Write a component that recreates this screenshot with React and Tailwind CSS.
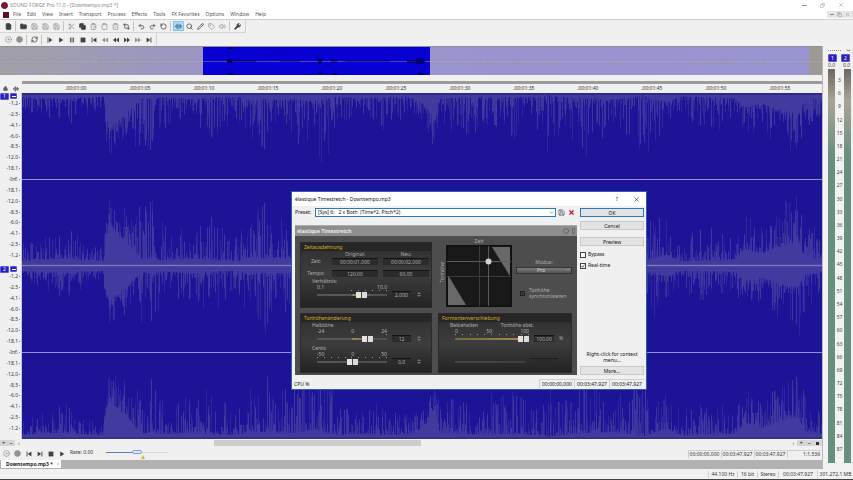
import {
  AudioLines, ChevronDown, ClipboardPaste, Clipboard, ClipboardCheck, Copy, Crop, File, Folder, Lock,
  Disc, Pencil, Redo2, RotateCcw, RefreshCw, Save, Scissors, Search, Tag, Undo2, Volume2, X, Circle, Wrench,
} from "lucide-react";
import clsx from "clsx";

const MENU = ["File", "Edit", "View", "Insert", "Transport", "Process", "Effects", "Tools", "FX Favorites", "Options", "Window", "Help"];
const TIMES = ["00:01:00", "00:01:05", "00:01:10", "00:01:15", "00:01:20", "00:01:25", "00:01:30", "00:01:35", "00:01:40", "00:01:45", "00:01:50", "00:01:55"];
const DB_HALF = ["-1.2", "-2.5", "-4.1", "-6.0", "-8.5", "-12.0", "-18.1"];
const DB = [...DB_HALF, "-Inf.", ...[...DB_HALF].reverse()];
const METER = Array.from({ length: 29 }, (_, i) => (i + 1) * 3);

// x, peak depth, density (1 = solid block of peaks)
const ENVELOPE = [
  [0, 18, 0.2], [20, 24, 0.2], [45, 36, 0.2], [60, 22, 0.2], [81, 16, 0.2], [84, 54, 0.8], [88, 66, 0.9], [98, 52, 0.8],
  [112, 60, 0.3], [120, 56, 0.1], [132, 70, 0.1], [140, 38, 0.1], [170, 36, 0.2], [186, 50, 0.1], [215, 28, 0.1],
  [225, 44, 0.2], [243, 66, 0.1], [255, 36, 0.2], [272, 62, 0.1], [290, 54, 0.2], [302, 72, 0.1], [315, 32, 0.1],
  [340, 26, 0.2], [360, 38, 0.1], [385, 24, 0.1], [402, 28, 0.6], [412, 66, 0.7], [418, 30, 0.2], [440, 46, 0.1],
  [462, 38, 0.1], [490, 46, 0.1], [510, 30, 0.1], [527, 70, 0], [540, 32, 0.1], [562, 66, 0.1], [572, 60, 0.1],
  [590, 38, 0.2], [620, 62, 0], [645, 44, 0.3], [660, 26, 0.1], [690, 40, 0.1], [712, 24, 0.2], [722, 46, 0.5],
  [740, 36, 0.4], [754, 50, 0.5], [768, 62, 0.5], [776, 78, 0.4], [784, 42, 0.2], [800, 26, 0.2],
];

function random(seed) {
  let s = seed;
  return () => {
    s = (s * 1664525 + 1013904223) % 4294967296;
    return s / 4294967296;
  };
}

function envelopeAt(x) {
  const i = ENVELOPE.findIndex((p) => p[0] > x);
  const a = ENVELOPE[i - 1];
  const b = ENVELOPE[i];
  const t = (x - a[0]) / (b[0] - a[0]);
  return [a[1] + (b[1] - a[1]) * t, a[2] + (b[2] - a[2]) * t];
}

function peaks(seed, edge, dir, scale) {
  const rnd = random(seed);
  let d = "";
  for (let x = 0; x < 800; x++) {
    const [depth, dense] = envelopeAt(x);
    const r = rnd();
    const len = 2 + depth * scale * (dense * 0.6 + (1 - dense * 0.6) * Math.pow(r, 4 - dense * 2));
    d += `M${x + 0.5} ${edge}v${(dir * len).toFixed(1)}`;
  }
  return d;
}

const PEAKS = [peaks(7, 0, 1, 0.9), peaks(7, 172, -1, 1), peaks(91, 174, 1, 0.9), peaks(91, 346, -1, 1)];
const PEAKS_SOFT = [peaks(33, 0, 1, 1), peaks(52, 172, -1, 1.1), peaks(75, 174, 1, 1), peaks(18, 346, -1, 1.1)];

const rndOverview = random(5);
const OVERVIEW = Array.from({ length: 270 }, (_, i) => [i * 3, rndOverview() * 4, rndOverview()]);

function Waveform() {
  return (
    <svg className="block h-full w-full" viewBox="0 0 800 346" preserveAspectRatio="none">
      <rect width="800" height="346" fill="#1c1396" />
      <g stroke="#4a44a2" strokeWidth="1">
        {PEAKS_SOFT.map((d, i) => <path key={i} d={d} opacity="0.4" />)}
        {PEAKS.map((d, i) => <path key={i} d={d} opacity="0.7" />)}
      </g>
      <rect width="800" height="2" fill="#312a84" />
      <rect y="344" width="800" height="2" fill="#353080" />
      <rect y="86" width="800" height="1" fill="#9490d4" />
      <rect y="259" width="800" height="1" fill="#9490d4" />
      <rect y="171" width="800" height="3" fill="#4c46a0" />
      <rect y="172" width="800" height="1" fill="#7f7ab8" />
    </svg>
  );
}

function Overview() {
  return (
    <svg className="block h-[29px] w-full" viewBox="0 0 822 29" preserveAspectRatio="none">
      <defs>
        <linearGradient id="ov">
          <stop offset="0" stopColor="#a09fa6" />
          <stop offset="0.07" stopColor="#9f9daf" />
          <stop offset="0.2" stopColor="#9a97c2" />
          <stop offset="0.6" stopColor="#9994d0" />
          <stop offset="1" stopColor="#9994d2" />
        </linearGradient>
      </defs>
      <rect width="822" height="29" fill="url(#ov)" />
      {OVERVIEW.map(([x, h, o]) => (
        <rect key={x} x={x} y={15 - h / 2} width="3" height={h} fill="#96948e" opacity={o * 0.5} />
      ))}
      <rect x="809" width="13" height="29" fill="#9d9996" />
      <rect y="15" width="822" height="1" fill="#aaa7b0" opacity="0.6" />
      <rect x="203" width="227" height="29" fill="#0800d2" />
      <rect x="203" y="15" width="227" height="1" fill="#4c48a8" />
      <g fill="#04005c">
        <rect x="227" y="13" width="5" height="4" />
        <rect x="232" y="14" width="24" height="2" opacity="0.5" />
        <rect x="280" y="14" width="20" height="2" opacity="0.4" />
        <rect x="318" y="12" width="4" height="6" opacity="0.8" />
        <rect x="331" y="13" width="6" height="4" opacity="0.5" />
        <rect x="345" y="14" width="45" height="2" opacity="0.4" />
        <rect x="407" y="14" width="18" height="3" opacity="0.7" />
        <rect x="416" y="12" width="8" height="6" opacity="0.6" />
        <rect x="228" y="1" width="5" height="2" />
        <rect x="228" y="27" width="5" height="2" />
        <rect x="318" y="26" width="5" height="2" />
        <rect x="333" y="27" width="4" height="2" />
        <rect x="418" y="27" width="6" height="2" />
      </g>
      <rect width="822" height="1" fill="#8f8f96" />
    </svg>
  );
}

const GLYPHS = {
  play: "M2 1v8l7-4z",
  playAll: "M1 0v10h1V0zM3 1v8l6-4z",
  pause: "M2 1h2v8H2zM6 1h2v8H6z",
  stop: "M1 1h8v8H1z",
  start: "M1 1h1.5v8H1zM9 1v8L3 5z",
  end: "M7.5 1H9v8H7.5zM1 1v8l6-4z",
  rewind: "M5 1v8L0 5zM10 1v8L5 5z",
  forward: "M0 1v8l5-4zM5 1v8l5-4z",
};

function Glyph({ name, className }) {
  return (
    <svg viewBox="0 0 10 10" className={clsx("size-[6px] fill-current", className)}>
      <path d={GLYPHS[name]} />
    </svg>
  );
}

function Tool({ label, icon: Icon, glyph, dim, active, solid }) {
  return (
    <button
      type="button"
      aria-label={label}
      className={clsx(
        "flex h-[10px] w-[11px] items-center justify-center",
        dim ? "text-[#929292]" : "text-[#3c4244]",
        active && "border border-[#8ac0e6] bg-[#b4d9f2] text-[#155a8a]"
      )}
    >
      {glyph ? <Glyph name={glyph} /> : <Icon className={clsx("size-[7px]", solid && "fill-current")} strokeWidth={2.5} />}
    </button>
  );
}

function Sep() {
  return <span className="mx-px h-[10px] w-[2px] border-l border-[#c4c4c4]" />;
}

function Toolbars() {
  return (
    <div className="border-t border-[#cfcfcf] bg-[#f0f0f0]">
      <div className="flex h-[13px] w-[246px] items-center border-r border-b border-[#d4d4d4] pl-[3px]">
        <Tool label="New" icon={File} solid />
        <Sep />
        <Tool label="Open" icon={Folder} solid />
        <Tool label="Save" icon={Save} dim />
        <Tool label="Save As" icon={Save} dim />
        <Tool label="Save All" icon={Save} dim />
        <Sep />
        <Tool label="Cut" icon={Scissors} dim />
        <Tool label="Copy" icon={Copy} solid />
        <Tool label="Paste" icon={ClipboardPaste} dim />
        <Tool label="Mix" icon={Clipboard} dim />
        <Tool label="Play Clipboard" icon={ClipboardCheck} dim />
        <Tool label="Trim" icon={Crop} />
        <Sep />
        <Tool label="Undo" icon={Undo2} />
        <Tool label="Redo" icon={Redo2} />
        <Tool label="Repeat" icon={RotateCcw} />
        <Sep />
        <Tool label="Edit Tool" icon={AudioLines} active />
        <Tool label="Magnify" icon={Search} />
        <Tool label="Pencil" icon={Pencil} />
        <Tool label="Event" icon={Tag} dim />
        <Tool label="Envelope" icon={Volume2} dim />
        <Sep />
        <Tool label="Script" icon={Wrench} solid />
      </div>
      <div className="flex h-[13px] w-[157px] items-center border-r border-[#d4d4d4] pl-[3px]">
        <Tool label="Record" icon={Disc} dim />
        <Tool label="Arm" icon={Circle} dim solid />
        <Sep />
        <Tool label="Loop" icon={RefreshCw} />
        <Sep />
        <Tool label="Play All" glyph="playAll" />
        <Tool label="Play" glyph="play" />
        <Tool label="Pause" glyph="pause" />
        <Tool label="Stop" glyph="stop" />
        <Tool label="Go to Start" glyph="start" />
        <Tool label="Previous" glyph="rewind" dim />
        <Tool label="Rewind" glyph="rewind" />
        <Tool label="Forward" glyph="forward" />
        <Tool label="Next" glyph="forward" dim />
        <Tool label="Go to End" glyph="end" />
      </div>
    </div>
  );
}

function Header() {
  return (
    <header className="shrink-0 bg-white">
      <div className="flex h-[10px] items-center pl-px text-[#8c8c8c]">
        <span className="mr-[2px] size-[7px] rounded-full border border-[#5a0a1c] bg-[#8a1230]" />
        <h1>SOUND FORGE Pro 11.0 - [Downtempo.mp3 *]</h1>
        <div className="ml-auto flex items-center gap-[13px] pr-[9px]">
          <button type="button" aria-label="Minimize" className="w-[5px] border-t border-[#999]" />
          <button type="button" aria-label="Restore"><Copy className="size-[5px] -scale-x-100" /></button>
          <button type="button" aria-label="Close"><X className="size-[6px]" /></button>
        </div>
      </div>
      <nav className="flex h-[9px] items-center pl-[3px] text-[#555]">
        <span className="mr-px size-[6px] bg-[#5e0f24]" />
        {MENU.map((m) => (
          <button key={m} type="button" className="px-[3px]">{m}</button>
        ))}
        <div className="ml-auto flex h-[7px] items-center gap-[3px] bg-[#e6e6e6] px-[3px] text-[#777]">
          <button type="button" aria-label="Minimize file" className="w-[4px] border-t border-[#888]" />
          <button type="button" aria-label="Restore file"><Copy className="size-[5px]" /></button>
          <button type="button" aria-label="Close file"><X className="size-[5px]" /></button>
        </div>
      </nav>
      <Toolbars />
    </header>
  );
}

function Badge({ children, className }) {
  return (
    <span className={clsx("flex items-center justify-center rounded-[1px] border border-[#5d57d8] bg-[#2a20bd] text-[5px] leading-none text-white", className)}>
      {children}
    </span>
  );
}

function ChannelScale({ n }) {
  return (
    <div className="relative flex flex-1 flex-col py-[5px]">
      <div className="absolute top-0 left-0 flex gap-px">
        <Badge className="h-[7px] w-[9px]">{n}</Badge>
        <Badge className="h-[6px] w-[7px]"><span className="h-px w-[4px] bg-white" /></Badge>
      </div>
      {DB.map((d, i) => (
        <div key={i} className="flex flex-1 items-center justify-end gap-px pr-px text-[#333]">
          {d}
          <span className="w-px border-t border-[#888]" />
        </div>
      ))}
    </div>
  );
}

function Meters() {
  const bar = "w-[7px] bg-linear-to-b from-[#6f6662] via-[#aaa396] via-8% to-[#67907f] to-22%";
  return (
    <aside className="flex w-[31px] shrink-0 flex-col border-l border-[#b8b8b8] bg-[#f2f2f2] pl-[5px]">
      <div className="flex h-[8px] items-center justify-between pr-[2px]">
        <span className="w-[13px] border-t border-dotted border-[#888]" />
        <ChevronDown className="size-[5px] text-[#444]" strokeWidth={4} />
      </div>
      <div className="flex gap-[4px]">
        <Badge className="h-[8px] w-[9px]">1</Badge>
        <Badge className="h-[8px] w-[9px]">2</Badge>
      </div>
      <div className="flex h-[7px] items-center gap-[8px] text-[#444]"><span>0.0</span><span>0.0</span></div>
      <div className="mb-[6px] flex flex-1 gap-px">
        <div className={bar} />
        <div className="flex w-[7px] flex-col pt-[5px] pb-[7px] text-center text-[#444]">
          {METER.map((m) => (
            <div key={m} className="flex flex-1 items-center justify-center">{m}</div>
          ))}
        </div>
        <div className={bar} />
      </div>
    </aside>
  );
}

function Editor() {
  return (
    <section className="flex min-w-0 flex-1 flex-col bg-[#f0f0f0]">
      <Overview />
      <div className="mt-[6px] flex h-[12px]">
        <div className="flex w-[22px] items-center justify-around pt-[3px] text-[#555]">
          <Lock className="size-[5px] fill-current" />
          <AudioLines className="size-[6px]" strokeWidth={3} />
        </div>
        <div className="min-w-0 flex-1 border-t-[3px] border-[#9b9b9b]">
          <div className="flex h-[9px] overflow-hidden text-[#333]">
            <span className="w-[5.4%] shrink-0" />
            {TIMES.map((t) => (
              <div key={t} className="w-[8%] shrink-0 leading-[9px]">,{t}</div>
            ))}
          </div>
        </div>
      </div>
      <div className="flex min-h-0 flex-1">
        <div className="flex w-[22px] shrink-0 flex-col border-r border-[#c8c8d8]">
          <ChannelScale n="1" />
          <ChannelScale n="2" />
        </div>
        <div className="min-w-0 flex-1"><Waveform /></div>
      </div>
      <div className="flex h-[8px] items-center leading-none text-[#222]">
        <div className="flex h-[6px] w-[15px] items-center justify-around bg-[#d6d6d6]">
          <button type="button" className="font-bold">+</button>
          <button type="button" className="font-bold">−</button>
        </div>
        <button type="button" aria-label="Scroll left" className="px-[3px]">‹</button>
        <div className="h-[6px] flex-1"><div className="ml-[25%] h-full w-[27%] bg-[#cdcdcd]" /></div>
        <button type="button" aria-label="Scroll right" className="px-[3px]">›</button>
        <div className="flex h-[6px] w-[25px] items-center justify-around bg-[#d6d6d6]">
          <button type="button" className="font-bold">+</button>
          <button type="button" className="font-bold">−</button>
          <button type="button" aria-label="Fit" className="size-[3px] bg-[#333]" />
        </div>
      </div>
      <Transport />
      <div className="h-[9px] bg-[#b2b2b2] pl-px">
        <div className="flex h-[8px] w-[60px] items-center gap-[3px] bg-white pl-[5px] font-bold text-[#222]">
          Downtempo.mp3 *
          <button type="button" aria-label="Close tab"><X className="size-[4px] text-[#777]" /></button>
        </div>
      </div>
    </section>
  );
}

function Transport() {
  return (
    <div className="flex h-[13px] items-center pl-px text-[#333]">
      <Tool label="Record" icon={Disc} dim />
      <Tool label="Arm" icon={Circle} dim solid />
      <Tool label="Go to Start" glyph="start" />
      <Tool label="Go to End" glyph="end" />
      <Tool label="Stop" glyph="stop" />
      <Tool label="Play" glyph="play" />
      <label htmlFor="rate" className="mb-[3px] ml-[3px] w-[36px]">Rate: 0,00</label>
      <div className="relative mb-[3px] flex items-center">
        <input
          id="rate"
          type="range"
          defaultValue="50"
          className="h-[6px] w-[62px] appearance-none bg-linear-to-r from-[#5c7fae] from-50% to-[#d8d8d8] to-50% bg-size-[100%_1px] bg-center bg-no-repeat [&::-webkit-slider-thumb]:h-[4px] [&::-webkit-slider-thumb]:w-[10px] [&::-webkit-slider-thumb]:appearance-none [&::-webkit-slider-thumb]:rounded-[2px] [&::-webkit-slider-thumb]:border [&::-webkit-slider-thumb]:border-[#7aa2d2] [&::-webkit-slider-thumb]:bg-[#dce8f6]"
        />
        <svg viewBox="0 0 4 4" className="absolute top-[6px] left-[35px] size-[4px]"><path d="M2 0l2 4H0z" fill="#d0c020" /></svg>
      </div>
      <div className="ml-auto flex gap-px pr-px">
        {["00:00:00,000", "00:03:47,927", "00:03:47,927"].map((t, i) => (
          <span key={i} className="w-[32px] border-t border-l border-[#cfcfcf] text-center">{t}</span>
        ))}
        <span className="w-[34px] border-t border-l border-[#cfcfcf] pr-px text-right">1:1.536</span>
      </div>
    </div>
  );
}

function StatusBar() {
  const cell = "border-l border-[#cfcfcf] text-center";
  return (
    <footer className="flex h-[11px] shrink-0 items-center justify-end border-b border-[#444] bg-[#f1f1f1] text-[#333]">
      <span className={clsx(cell, "w-[29px]")}>44.100 Hz</span>
      <span className={clsx(cell, "w-[20px]")}>16 bit</span>
      <span className={clsx(cell, "w-[21px]")}>Stereo</span>
      <span className={clsx(cell, "w-[39px]")}>00:03:47,927</span>
      <span className={clsx(cell, "w-[36px]")}>301.272,1 MB</span>
    </footer>
  );
}

function Fader({ label, value, className, disabled }) {
  return (
    <input
      type="range"
      aria-label={label}
      defaultValue={value}
      disabled={disabled}
      className={clsx(
        "h-[6px] appearance-none bg-size-[100%_2px] bg-center bg-no-repeat [&::-webkit-slider-thumb]:h-[6px] [&::-webkit-slider-thumb]:appearance-none [&::-webkit-slider-thumb]:bg-linear-to-r [&::-webkit-slider-thumb]:from-[#e4e4e0] [&::-webkit-slider-thumb]:from-42% [&::-webkit-slider-thumb]:via-[#444] [&::-webkit-slider-thumb]:via-50% [&::-webkit-slider-thumb]:to-[#dcdcd8] [&::-webkit-slider-thumb]:to-58%",
        disabled ? "[&::-webkit-slider-thumb]:w-0" : "[&::-webkit-slider-thumb]:w-[11px]",
        className
      )}
    />
  );
}

const GREY_TRACK = "w-[70px] bg-linear-to-r from-[#565656] to-[#4e4e4e]";
const HALF_TRACK = "w-[70px] bg-linear-to-r from-[#565656] from-50% via-[#a08b4c] via-51% to-[#505050] to-80%";
const FULL_TRACK = "w-[74px] bg-linear-to-r from-[#75683f] to-[#a8904c]";

function Field({ label, value, className }) {
  return (
    <input
      aria-label={label}
      defaultValue={value}
      className={clsx("h-[7px] min-w-0 border-t border-[#141414] bg-[#2b2b2b] text-center text-[#b0b0b0]", className)}
    />
  );
}

function Spin() {
  return (
    <span className="flex h-[7px] w-[6px] flex-col items-center justify-center gap-px">
      <svg viewBox="0 0 4 2" className="h-[2px] w-[4px] fill-[#777]"><path d="M0 2l2-2 2 2z" /></svg>
      <svg viewBox="0 0 4 2" className="h-[2px] w-[4px] fill-[#777]"><path d="M0 0l2 2 2-2z" /></svg>
    </span>
  );
}

function Ticks({ from = 0 }) {
  return (
    <div className="flex h-[2px] justify-between">
      {Array.from({ length: 11 }, (_, i) => (
        <span key={i} className={clsx("h-px w-px", i >= from && "bg-[#9a9a9a]")} />
      ))}
    </div>
  );
}

function Scale({ marks }) {
  return <div className="flex h-[5px] justify-between leading-[5px]">{marks.map((m) => <span key={m}>{m}</span>)}</div>;
}

function Group({ title, className, children }) {
  return (
    <section className={clsx("border border-[#2a2a2a] bg-linear-to-b from-[#2e2e2e] via-[#3d3d3d] to-[#232323] text-[#b0b0b0]", className)}>
      <h3 className="h-[8px] bg-[#262626] pl-[3px] leading-[8px] text-[#d6ae30]">{title}</h3>
      {children}
    </section>
  );
}

function TimePanel() {
  return (
    <Group title="Zeitausdehnung" className="h-[66px]">
      <div className="grid grid-cols-[22px_46px_46px] gap-x-[5px] gap-y-[5px] px-[4px]">
        <span />
        <span className="-mb-[5px] text-center">Original:</span>
        <span className="-mb-[5px] text-center">Neu:</span>
        <span className="text-center">Zeit:</span>
        <Field label="Zeit original" value="00:00:01,000" className="w-full" />
        <Field label="Zeit neu" value="00:00:02,000" className="w-full" />
        <span className="text-center">Tempo:</span>
        <Field label="Tempo original" value="120,00" className="w-full" />
        <Field label="Tempo neu" value="60,00" className="w-full" />
      </div>
      <div className="mt-px pl-[11px] leading-[7px]">Verhältnis:</div>
      <div className="flex items-end gap-[5px] pl-[16px]">
        <div className="w-[70px]">
          <Scale marks={["0.1", "10.0"]} />
          <Ticks from={5} />
          <Fader label="Verhältnis" value="66" className={clsx(HALF_TRACK, "block")} />
        </div>
        <Field label="Verhältnis Wert" value="2,000" className="w-[19px]" />
        <Spin />
      </div>
    </Group>
  );
}

function PitchPanel() {
  return (
    <Group title="Tonhöhenänderung" className="h-[60px]">
      <div className="pl-[11px] leading-[7px]">Halbtöne</div>
      <div className="flex items-end gap-[5px] pl-[16px]">
        <div className="w-[70px]">
          <Scale marks={["-24", "0", "24"]} />
          <Ticks from={10} />
          <Fader label="Halbtöne" value="77" className={clsx(HALF_TRACK, "block")} />
        </div>
        <Field label="Halbtöne Wert" value="12" className="w-[19px]" />
        <Spin />
      </div>
      <div className="mt-[3px] pl-[11px] leading-[7px]">Cents:</div>
      <div className="flex items-end gap-[5px] pl-[16px]">
        <div className="w-[70px]">
          <Scale marks={["-50", "0", "50"]} />
          <Ticks />
          <Fader label="Cents" value="50" className={clsx(GREY_TRACK, "block")} />
        </div>
        <Field label="Cents Wert" value="0,0" className="w-[19px]" />
        <Spin />
      </div>
    </Group>
  );
}

function FormantPanel() {
  return (
    <Group title="Formantenverschiebung" className="h-[60px]">
      <div className="flex justify-between pr-[37px] pl-[11px] leading-[7px]">
        <span>Beibehalten</span>
        <span>Tonhöhe abst.</span>
      </div>
      <div className="flex items-end gap-[5px] pl-[16px]">
        <div className="w-[74px]">
          <Scale marks={["0", "50", "100"]} />
          <Ticks />
          <Fader label="Formanten" value="100" className={clsx(FULL_TRACK, "block")} />
        </div>
        <Field label="Formanten Wert" value="100,00" className="w-[20px]" />
        <span>%</span>
      </div>
      <div className="mt-[16px] flex items-center gap-[5px] pl-[16px] opacity-60">
        <Fader label="Versatz" value="0" disabled className={GREY_TRACK} />
        <Field label="Versatz Wert" value="" className="w-[28px]" />
      </div>
    </Group>
  );
}

function XYPad() {
  return (
    <div className="flex text-[#b0b0b0]">
      <span className="w-[8px] rotate-180 self-center text-center leading-[8px] [writing-mode:vertical-rl]">Tonhöhe</span>
      <div>
        <div className="text-center leading-[8px]">Zeit</div>
        <svg viewBox="0 0 66 62" className="block h-[62px] w-[66px] bg-[#191919]">
          <rect x="0.5" y="0.5" width="65" height="61" fill="none" stroke="#101010" strokeWidth="2" />
          <path d="M46 2h18v29z" fill="#686868" />
          <path d="M2 30l18 30H2z" fill="#686868" />
          <path d="M33.5 1v60M1 31.5h64" stroke="#3d3d3d" strokeWidth="1" />
          <path d="M42.5 1v60M1 16.5h64" stroke="#5c5c56" strokeWidth="1" />
          <circle cx="42.5" cy="16.5" r="3" fill="#d4d4cc" />
        </svg>
      </div>
    </div>
  );
}

function Plugin() {
  return (
    <div>
      <div className="flex h-[11px] items-center border-t border-[#ababab] bg-[#8e8e8e] px-[2px] font-bold text-[#ececec]">
        <h2>élastique Timestretch</h2>
        <span className="ml-auto flex items-center gap-[3px] text-[#444]">
          <Circle className="size-[6px]" />
          <span className="h-[6px] w-[3px] border border-[#6d6d6d]" />
        </span>
      </div>
      <div className="grid grid-cols-[132px_1fr] gap-x-[6px] gap-y-[5px] bg-[#4d4d4d] pt-[6px] pr-[5px] pb-[2px] pl-[5px]">
        <TimePanel />
        <div className="-mt-[5px] flex justify-between">
          <XYPad />
          <div className="w-[56px] pt-[22px] text-[#b0b0b0]">
            <label htmlFor="modus" className="block text-center leading-[7px]">Modus:</label>
            <div className="relative mt-px">
              <select id="modus" className="block h-[7px] w-full appearance-none border border-[#333] bg-linear-to-b from-[#7c7c7c] to-[#555] pr-[6px] text-center text-[5px] leading-none text-[#ddd]">
                <option>Pro</option>
              </select>
              <ChevronDown className="pointer-events-none absolute top-px right-[2px] size-[4px]" strokeWidth={4} />
            </div>
            <label className="mt-[13px] flex items-center gap-[4px] pl-[4px]">
              <input type="checkbox" className="size-[5px] shrink-0 appearance-none border border-[#222] bg-[#3a3a3a]" />
              <span className="leading-[6px]">Tonhöhe<br />synchronisieren</span>
            </label>
          </div>
        </div>
        <PitchPanel />
        <FormantPanel />
      </div>
    </div>
  );
}

function DialogButton({ children, primary }) {
  return (
    <button
      type="button"
      className={clsx("h-[9px] w-full border bg-[#e3e3e3] leading-[6px]", primary ? "border-[#2c78b8]" : "border-[#c9c9c9]")}
    >
      {children}
    </button>
  );
}

function Check({ label, checked }) {
  return (
    <label className="flex items-center gap-[2px]">
      <input
        type="checkbox"
        defaultChecked={checked}
        className="peer size-[6px] appearance-none border border-[#444] bg-white"
      />
      <svg viewBox="0 0 6 6" className="-ml-[8px] hidden size-[6px] peer-checked:block">
        <path d="M1.5 3l1 1.3 2-2.6" fill="none" stroke="#222" strokeWidth="0.8" />
      </svg>
      {label}
    </label>
  );
}

function TimestretchDialog() {
  return (
    <div role="dialog" aria-label="élastique Timestretch" className="absolute top-[191px] left-[291px] w-[356px] border border-[#2b5fae] bg-[#f0f0f0] text-[#111]">
      <div className="flex h-[14px] items-center bg-white pr-[6px] pl-[3px]">
        <span>élastique Timestretch - Downtempo.mp3</span>
        <button type="button" aria-label="Help" className="ml-auto">?</button>
        <button type="button" aria-label="Close" className="ml-[15px]"><X className="size-[7px]" /></button>
      </div>
      <div className="flex gap-[3px] pr-[2px] pl-[3px]">
        <div className="w-[282px]">
          <div className="flex h-[19px] items-start pt-[2px]">
            <label htmlFor="preset" className="w-[20px] leading-[9px]">Preset:</label>
            <div className="relative w-[241px]">
              <select id="preset" className="block h-[9px] w-full appearance-none border border-[#2c78b8] bg-white pl-[2px] text-[5px] leading-none">
                <option>[Sys] 6:&nbsp;&nbsp; 2 x Both&nbsp; (Time*2, Pitch*2)</option>
              </select>
              <ChevronDown className="pointer-events-none absolute top-[2px] right-[2px] size-[5px]" />
            </div>
            <button type="button" aria-label="Save preset" className="mt-px ml-[2px]"><Save className="size-[7px] text-[#345]" /></button>
            <button type="button" aria-label="Delete preset" className="mt-px ml-[3px]"><X className="size-[7px] text-[#d3103f]" strokeWidth={4} /></button>
          </div>
          <Plugin />
        </div>
        <div className="flex flex-1 flex-col pt-[2px]">
          <DialogButton primary>OK</DialogButton>
          <div className="mt-[4px]"><DialogButton>Cancel</DialogButton></div>
          <div className="mt-[7px] mb-[5px]"><DialogButton>Preview</DialogButton></div>
          <div className="flex flex-col gap-[4px]">
            <Check label="Bypass" />
            <Check label="Real-time" checked />
          </div>
          <p className="mt-auto px-[4px] pb-[3px] text-center leading-[6px]">Right-click for context menu...</p>
          <DialogButton>More...</DialogButton>
        </div>
      </div>
      <div className="flex h-[14px] items-end pr-[2px] pb-px pl-[2px]">
        <span className="leading-[8px]">CPU %</span>
        <div className="ml-auto flex">
          {["00:00:00,000", "00:03:47,927", "00:03:47,927"].map((t, i) => (
            <span key={i} className="w-[35px] border-t border-l border-[#cfcfcf] text-center leading-[8px]">{t}</span>
          ))}
        </div>
      </div>
    </div>
  );
}

export default function App() {
  return (
    <div className="relative flex h-screen w-full flex-col overflow-hidden bg-[#f0f0f0] font-['Noto_Sans',sans-serif] text-[5px] leading-[7px]">
      <Header />
      <main className="flex min-h-0 flex-1">
        <Editor />
        <Meters />
      </main>
      <StatusBar />
      <TimestretchDialog />
    </div>
  );
}
